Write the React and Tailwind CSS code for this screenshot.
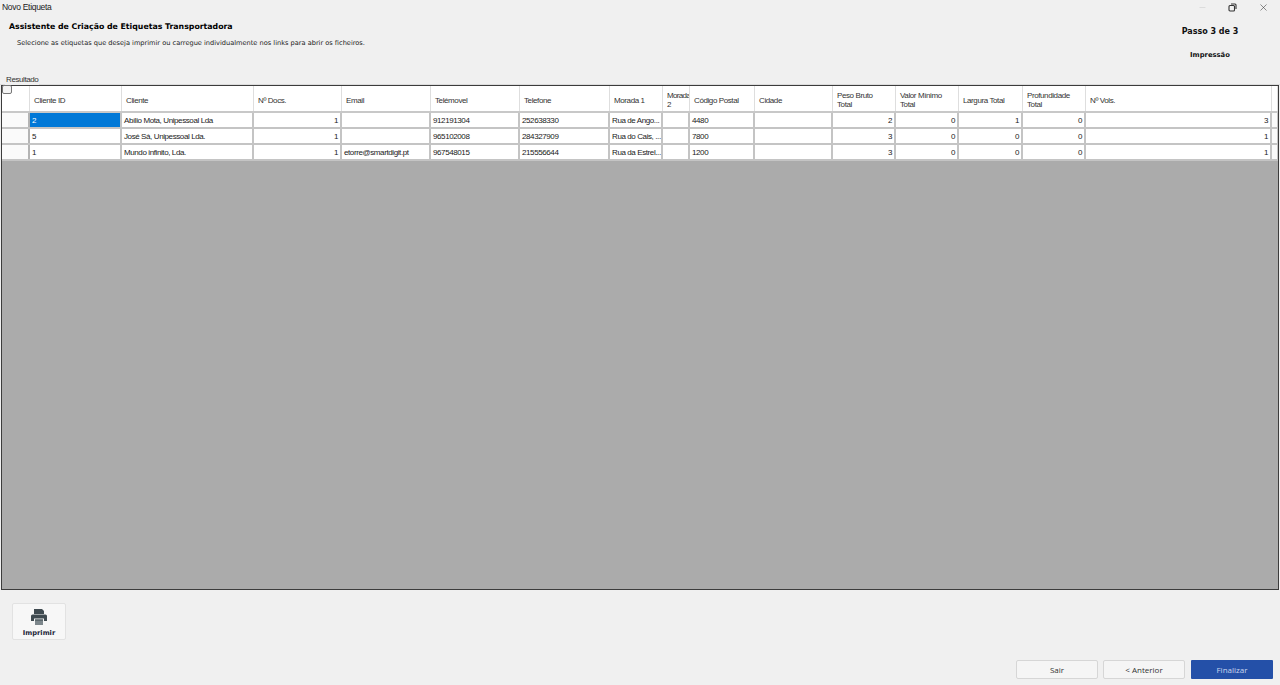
import { X, Minus } from 'lucide-react';

const cols = 'grid grid-cols-[28px_92px_132px_88px_89px_89px_90px_53px_27px_65px_78px_63px_63px_64px_63px_186px_6px]';

const headers = [
  '', 'Cliente ID', 'Cliente', 'Nº Docs.', 'Email', 'Telémovel', 'Telefone', 'Morada 1', 'Morada 2',
  'Código Postal', 'Cidade', 'Peso Bruto\nTotal', 'Valor Mínimo\nTotal', 'Largura Total', 'Profundidade\nTotal', 'Nº Vols.', '',
];

const rows = [
  ['2', 'Abílio Mota, Unipessoal Lda', '1', '', '912191304', '252638330', 'Rua de Ango...', '', '4480', '', '2', '0', '1', '0', '3'],
  ['5', 'José Sá, Unipessoal Lda.', '1', '', '965102008', '284327909', 'Rua do Cais, ...', '', '7800', '', '3', '0', '0', '0', '1'],
  ['1', 'Mundo infinito, Lda.', '1', 'etorre@smartdigit.pt', '967548015', '215556644', 'Rua da Estrel...', '', '1200', '', '3', '0', '0', '0', '1'],
];

// colunas numéricas alinhadas à direita
const numeric = [2, 10, 11, 12, 13, 14];

function PrinterIcon() {
  return (
    <svg width="18" height="18" viewBox="0 0 18 18" fill="#3f4a50">
      <path d="M4 1h8l2 2v3H4z" />
      <path d="M2.500 6.500h13a1.500 1.500 0 0 1 1.500 1.500v5h-3v-2.500H4V13H1V8a1.500 1.500 0 0 1 1.500-1.500z" />
      <path d="M5 11.500h8V17H5z" fill="#7d878c" />
      <path d="M5 11.500h8v1H5z" />
    </svg>
  );
}

export default function App() {
  return (
    <div className="w-[1280px] h-[685px] flex flex-col bg-[#f0f0f0] overflow-hidden font-['Liberation_Sans',sans-serif] text-[#111]">
      {/* Barra de título */}
      <div className="h-[14px] flex items-center justify-between pl-[2px]">
        <span className="text-[8.500px] tracking-[-0.300px] text-[#222]">Novo Etiqueta</span>
        <div className="flex items-center gap-[21px] pr-[11px] text-[#333]">
          <Minus size={9} strokeWidth={1} className="text-[#bbb]" />
          <svg width="9" height="9" viewBox="0 0 9 9" fill="none" stroke="#333" strokeWidth="1.100">
            <rect x="1" y="2.500" width="5.500" height="5.500" rx="1" />
            <path d="M3 1h4a1 1 0 0 1 1 1v4" />
          </svg>
          <X size={11} strokeWidth={1.200} />
        </div>
      </div>

      {/* Cabeçalho do assistente */}
      <div className="h-[66px] flex justify-between font-['DejaVu_Sans',sans-serif]">
        <div className="pl-[9px] pt-[7px]">
          <div className="text-[7.800px] leading-[11px] font-bold text-black">Assistente de Criação de Etiquetas Transportadora</div>
          <div className="pl-[8px] pt-[6px] text-[6.620px] leading-[10px] text-[#222]">
            Selecione as etiquetas que deseja imprimir ou carregue individualmente nos links para abrir os ficheiros.
          </div>
        </div>
        <div className="w-[100px] mr-[20px] pt-[12px] flex flex-col items-center font-bold text-[#111]">
          <div className="text-[8px] leading-[11px]">Passo 3 de 3</div>
          <div className="text-[6.800px] leading-[10px] pt-[13px]">Impressão</div>
        </div>
      </div>

      {/* Grupo Resultado */}
      <div className="h-[5px] relative border-b border-[#dcdcdc]">
        <span className="absolute left-[5px] top-[-5px] bg-[#f0f0f0] px-[1px] text-[8px] tracking-[-0.400px] leading-[10px] text-[#333]">Resultado</span>
      </div>

      {/* Grelha */}
      <div className="relative mx-[1px] h-[505px] border-[1.500px] border-[#3c3c3c] bg-[#ababab] text-[8px] tracking-[-0.400px]">
        <span className="absolute left-0 top-[-1px] w-[10px] h-[9px] border border-[#777] rounded-[2px] bg-[#f4f4f4]" />
        <div className={`${cols} h-[27px] bg-white border-b-2 border-[#c8c8c8] text-[#333]`}>
          {headers.map((h, i) => (
            <div
              key={i}
              className={`flex items-center pl-[4px] pt-[3px] leading-[9px] whitespace-pre-line border-r border-[#dedede] overflow-hidden ${i === 8 ? 'tracking-[-0.700px]' : ''}`}
            >
              {h}
            </div>
          ))}
        </div>
        {rows.map((row, r) => (
          <div key={r} className={`${cols} h-[16px] bg-white border-b-2 border-[#c4c4c4] text-[#1a1a1a]`}>
            <div className="border-r-2 border-[#b4b4b4] bg-[#fafafa]" />
            {row.map((cell, c) => (
              <div
                key={c}
                className={`flex items-center px-[2px] pt-[1px] border-r-2 border-[#c4c4c4] whitespace-nowrap overflow-hidden ${numeric.includes(c) ? 'justify-end' : ''} ${r === 0 && c === 0 ? 'bg-[#0078d7] text-white' : ''}`}
              >
                {cell}
              </div>
            ))}
            <div className="border-r border-[#c4c4c4] bg-[#fafafa]" />
          </div>
        ))}
      </div>

      {/* Botão imprimir */}
      <div className="pl-[12px] pt-[13px] h-[70px]">
        <button className="w-[54px] h-[37px] bg-[#f7f7f7] border border-[#e2e2e2] rounded-[2px] flex flex-col items-center pt-[4px] font-['DejaVu_Sans',sans-serif] text-[6.700px] leading-[10px] font-bold text-[#1c2438]">
          <PrinterIcon />
          <span className="pt-[2px]">Imprimir</span>
        </button>
      </div>

      {/* Navegação */}
      <div className="flex justify-end pr-[7px] font-['Open_Sans',sans-serif] text-[8px]">
        <button className="w-[82px] h-[19px] bg-[#f5f5f5] border border-[#d6d6d6] rounded-[2px] text-[#333]">Sair</button>
        <button className="ml-[5px] w-[82px] h-[19px] bg-[#f5f5f5] border border-[#d6d6d6] rounded-[2px] text-[#333]">&lt; Anterior</button>
        <button className="ml-[6px] w-[82px] h-[19px] bg-[#2450a8] rounded-[1px] text-[#c9d6ee]">Finalizar</button>
      </div>
    </div>
  );
}
